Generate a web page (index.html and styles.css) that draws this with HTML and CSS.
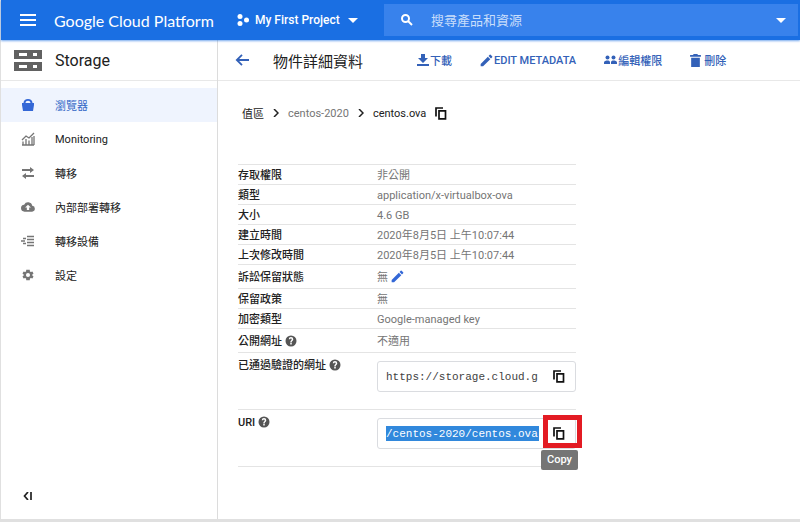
FILE: index.html
```html
<!DOCTYPE html>
<html lang="zh-Hant">
<head>
    <meta charset="UTF-8">
    <meta name="viewport" content="width=device-width, initial-scale=1.0">
    <title>物件詳細資料</title>
    <link rel="stylesheet" href="styles.css">
</head>
<body>
    <!-- Shared icons -->
    <svg class="sprite" aria-hidden="true">
        <symbol id="icon-copy" viewBox="0 0 12 13">
            <path d="M1 9.500V1h7M4 3.800h6.500v8H4z" fill="none" stroke="currentColor" stroke-width="1.700"/>
        </symbol>
        <symbol id="icon-pencil" viewBox="2 2 20 20">
            <path d="M3 17.250V21h3.750L17.810 9.940l-3.750-3.750L3 17.250zM20.710 7.040a1 1 0 0 0 0-1.410l-2.340-2.340a1 1 0 0 0-1.410 0l-1.830 1.830 3.750 3.750 1.830-1.830z"/>
        </symbol>
        <symbol id="icon-help" viewBox="0 0 24 24">
            <path d="M12 1a11 11 0 1 0 0 22 11 11 0 0 0 0-22zm1.500 18h-3v-3h3zm2.200-7.800-1 .9c-.8.800-1.200 1.400-1.200 2.900h-3v-.8c0-1.100.4-2.100 1.200-2.900l1.200-1.200c.4-.4.600-.9.600-1.400a1.600 1.600 0 0 0-3.200 0H7.500a4.500 4.500 0 0 1 9 0c0 1-.3 1.800-.8 2.500z"/>
        </symbol>
    </svg>

    <div class="console">
        <header class="topbar">
            <div class="brand">
                <button class="icon-btn" type="button" aria-label="Menu">
                    <svg width="16" height="12" viewBox="0 0 16 12"><path d="M0 0h16v2H0zM0 5h16v2H0zM0 10h16v2H0z"/></svg>
                </button>
                <a class="logo" href="#">Google Cloud Platform</a>
            </div>
            <button class="project" type="button">
                <svg width="12" height="12" viewBox="0 0 12 12"><circle cx="3" cy="2.500" r="2.500"/><circle cx="3" cy="9.500" r="2.500"/><circle cx="9.500" cy="6" r="2.500"/></svg>
                <span>My First Project</span>
                <svg width="10" height="5" viewBox="0 0 10 5"><path d="M0 0h10L5 5z"/></svg>
            </button>
            <form class="search">
                <svg width="12" height="12" viewBox="0 0 12 12"><circle cx="4.500" cy="4.500" r="3.500" fill="none" stroke="currentColor" stroke-width="2"/><path d="M7 7l4 4" stroke="currentColor" stroke-width="2"/></svg>
                <input type="text" placeholder="搜尋產品和資源" aria-label="搜尋產品和資源">
                <button class="icon-btn" type="button" aria-label="Expand">
                    <svg width="10" height="5" viewBox="0 0 10 5"><path d="M0 0h10L5 5z"/></svg>
                </button>
            </form>
        </header>

        <div class="layout">
            <aside class="sidebar">
                <div class="product">
                    <svg width="28" height="21" viewBox="0 0 28 21"><path fill-rule="evenodd" d="M0 0h28v9H0zM5 3v3h8V3zM19 3v3h4V3zM0 12h28v9H0zM5 15v3h8v-3zM19 15v3h4v-3z"/></svg>
                    <h2>Storage</h2>
                </div>
                <nav class="menu">
                    <a class="active" href="#">
                        <svg viewBox="0 0 14 14"><path d="M1 5h1.500c0-2.500 2-4 4.500-4s4.500 1.500 4.500 4H13v2l-1 6H2L1 7zM4.500 5h5c-.2-1.500-1-2.300-2.500-2.300S4.700 3.500 4.500 5z" fill-rule="evenodd"/></svg>
                        瀏覽器
                    </a>
                    <a href="#">
                        <svg viewBox="0 0 14 14"><path d="M1 8l4-4 3 2 5-5M2 13V9.500M5 13V7M8 13V8.500M11 13V5M13 13V4M1 13h12" fill="none" stroke="currentColor" stroke-width="1.300"/></svg>
                        Monitoring
                    </a>
                    <a href="#">
                        <svg viewBox="0 0 14 14"><path d="M1 3h8V1l4 3-4 3V5H1zM13 9H5V7l-4 3 4 3v-2h8z"/></svg>
                        轉移
                    </a>
                    <a href="#">
                        <svg viewBox="0 0 24 24"><path d="M19.350 10.040A7.490 7.490 0 0 0 5.350 8.040 6 6 0 0 0 6 20h13a5 5 0 0 0 .35-9.960zM14 13v4h-4v-4H7l5-5 5 5z"/></svg>
                        內部部署轉移
                    </a>
                    <a href="#">
                        <svg viewBox="0 0 14 14"><path d="M6 2.500h7M2 4.500h3M6 5.500h7M0 7h4M6 8.500h7M2 9.500h3M6 11.500h7" stroke="currentColor" stroke-width="1.500"/></svg>
                        轉移設備
                    </a>
                    <a href="#">
                        <svg viewBox="0 0 24 24"><path fill-rule="evenodd" d="M19.400 13a7.500 7.500 0 0 0 0-2l2.100-1.600-2-3.500-2.500 1a7.300 7.300 0 0 0-1.700-1L15 3H9l-.4 2.900a7.300 7.300 0 0 0-1.700 1l-2.400-1-2 3.500L4.600 11a7.500 7.500 0 0 0 0 2l-2.100 1.600 2 3.500 2.500-1a7.300 7.300 0 0 0 1.700 1L9 21h6l.4-2.900a7.300 7.300 0 0 0 1.700-1l2.400 1 2-3.500zM12 15.500a3.500 3.500 0 1 1 0-7 3.500 3.500 0 0 1 0 7z"/></svg>
                        設定
                    </a>
                </nav>
                <button class="icon-btn collapse" type="button" aria-label="Collapse">
                    <svg width="10" height="8" viewBox="0 0 10 8"><path d="M5 0L1.500 4 5 8M8 0v8" fill="none" stroke="currentColor" stroke-width="1.700"/></svg>
                </button>
            </aside>

            <main class="content">
                <div class="toolbar">
                    <button class="icon-btn back" type="button" aria-label="Back">
                        <svg width="14" height="12" viewBox="0 0 14 12"><path d="M14 6H2M7 .8L1.800 6 7 11.200" fill="none" stroke="currentColor" stroke-width="1.800"/></svg>
                    </button>
                    <h1>物件詳細資料</h1>
                    <div class="actions">
                        <button type="button"><svg width="12" height="12" viewBox="0 0 12 12"><path d="M4 0h4v4h3L6 9 1 4h3zM0 10h12v2H0z"/></svg>下載</button>
                        <button type="button"><svg width="13" height="13"><use href="#icon-pencil"/></svg>EDIT METADATA</button>
                        <button type="button"><svg width="13" height="10" viewBox="0 0 13 10"><circle cx="3.500" cy="2.500" r="2"/><circle cx="9.500" cy="2.500" r="2"/><path d="M0 9V7.500C0 6 2 5.500 3.500 5.500S6 6 6 7.500V9zM7 9V7.500C7 6 8 5.500 9.500 5.500S13 6 13 7.500V9z"/></svg>編輯權限</button>
                        <button type="button"><svg class="trash" width="11" height="13" viewBox="0 0 10 12"><path d="M0 1h3V0h4v1h3v1.500H0zM1 3.500h8V12H1z"/></svg>刪除</button>
                    </div>
                </div>

                <div class="details">
                    <nav class="breadcrumb">
                        <a class="root" href="#">值區</a>
                        <svg width="6" height="8" viewBox="0 0 6 8"><path d="M1 0l4 4-4 4" fill="none" stroke="currentColor" stroke-width="1.500"/></svg>
                        <a href="#">centos-2020</a>
                        <svg width="6" height="8" viewBox="0 0 6 8"><path d="M1 0l4 4-4 4" fill="none" stroke="currentColor" stroke-width="1.500"/></svg>
                        <span class="current">centos.ova</span>
                        <button class="icon-btn copy" type="button" aria-label="Copy name"><svg width="12" height="13"><use href="#icon-copy"/></svg></button>
                    </nav>

                    <table class="info">
                        <tr><th scope="row">存取權限</th><td>非公開</td></tr>
                        <tr><th scope="row">類型</th><td>application/x-virtualbox-ova</td></tr>
                        <tr><th scope="row">大小</th><td>4.6 GB</td></tr>
                        <tr><th scope="row">建立時間</th><td>2020年8月5日 上午10:07:44</td></tr>
                        <tr><th scope="row">上次修改時間</th><td>2020年8月5日 上午10:07:44</td></tr>
                        <tr class="tall"><th scope="row">訴訟保留狀態</th><td>無 <button class="icon-btn edit" type="button" aria-label="Edit"><svg width="13" height="13"><use href="#icon-pencil"/></svg></button></td></tr>
                        <tr><th scope="row">保留政策</th><td>無</td></tr>
                        <tr><th scope="row">加密類型</th><td>Google-managed key</td></tr>
                        <tr class="tall"><th scope="row">公開網址 <svg class="help" width="12" height="12"><use href="#icon-help"/></svg></th><td>不適用</td></tr>
                        <tr class="field">
                            <th scope="row"><label for="auth-url">已通過驗證的網址</label> <svg class="help" width="12" height="12"><use href="#icon-help"/></svg></th>
                            <td>
                                <div class="copy-box">
                                    <input id="auth-url" type="text" value="https://storage.cloud.g" readonly>
                                    <button class="icon-btn copy" type="button" aria-label="Copy URL"><svg width="12" height="13"><use href="#icon-copy"/></svg></button>
                                </div>
                            </td>
                        </tr>
                        <tr class="field">
                            <th scope="row"><label for="uri">URI</label> <svg class="help" width="12" height="12"><use href="#icon-help"/></svg></th>
                            <td>
                                <div class="copy-box">
                                    <input class="selected" id="uri" type="text" value="/centos-2020/centos.ova" readonly>
                                    <button class="icon-btn copy" type="button" aria-label="Copy URI"><svg width="12" height="13"><use href="#icon-copy"/></svg></button>
                                    <span class="highlight"></span>
                                    <span class="tooltip" role="tooltip">Copy</span>
                                </div>
                            </td>
                        </tr>
                    </table>
                </div>
            </main>
        </div>
    </div>
</body>
</html>
```
FILE: styles.css
```css
* {
    box-sizing: border-box;
}

body {
    margin: 0;
    font-family: Roboto, "Noto Sans CJK TC", sans-serif;
    font-size: 11px;
    color: #212121;
    background-color: #fff;
}

svg {
    fill: currentColor;
    flex-shrink: 0;
}

.sprite {
    display: none;
}

button {
    font: inherit;
    color: inherit;
    background: none;
    border: none;
    padding: 0;
    cursor: pointer;
}

.icon-btn {
    display: inline-flex;
    align-items: center;
    justify-content: center;
}

a {
    color: inherit;
    text-decoration: none;
}

.console {
    display: flex;
    flex-direction: column;
    min-height: 100vh;
    border-left: 1px solid #e0e0e0;
    border-bottom: 3px solid #e0e0e0;
}

/* Top bar */
.topbar {
    display: flex;
    align-items: center;
    height: 40px;
    background-color: #1a6fe3;
    color: #fff;
    box-shadow: 0 1px 2px rgba(26, 111, 227, 0.6);
    z-index: 1;
}

.brand {
    display: flex;
    align-items: center;
    gap: 18px;
    width: 236px;
    padding-left: 19px;
}

.logo {
    font-family: Lato, sans-serif;
    font-size: 16px;
    white-space: nowrap;
}

.project {
    display: flex;
    align-items: center;
    gap: 6px;
    width: 147px;
    font-size: 12px;
    font-weight: 500;
    white-space: nowrap;
}

.project span {
    margin-right: 2px;
}

.search {
    display: flex;
    flex: 1;
    align-items: center;
    gap: 18px;
    height: 32px;
    margin-right: 2px;
    padding: 0 12px 0 17px;
    background-color: #3882ec;
}

.search input {
    flex: 1;
    min-width: 0;
    padding: 0;
    border: none;
    outline: none;
    background: none;
    font: inherit;
    font-size: 13px;
    color: #fff;
}

.search input::placeholder {
    color: #c9defb;
}

/* Sidebar */
.layout {
    display: flex;
    flex: 1;
}

.sidebar {
    display: flex;
    flex-direction: column;
    width: 217px;
    flex-shrink: 0;
    border-right: 1px solid #dcdcdc;
}

.product {
    display: flex;
    align-items: center;
    gap: 13px;
    height: 41px;
    padding-left: 13px;
    border-bottom: 1px solid #e8e8e8;
    color: #616161;
}

.product h2 {
    margin: 0;
    font-size: 16px;
    font-weight: 400;
    color: #212121;
}

.menu {
    padding-top: 7px;
}

.menu a {
    display: flex;
    align-items: center;
    gap: 20px;
    height: 34px;
    padding-left: 20px;
}

.menu svg {
    width: 14px;
    height: 14px;
    color: #757575;
}

.menu .active {
    background-color: #eff4fe;
    color: #3367c6;
}

.menu .active svg {
    color: #3367d6;
}

.collapse {
    margin: auto 0 19px 22px;
    align-self: flex-start;
}

/* Main area */
.content {
    flex: 1;
    min-width: 0;
}

.toolbar {
    display: flex;
    align-items: center;
    height: 41px;
    padding-left: 17px;
    border-bottom: 1px solid #e8e8e8;
    color: #3361b8;
    white-space: nowrap;
}

.toolbar h1 {
    width: 144px;
    margin: 0 0 0 24px;
    font-size: 15px;
    font-weight: 400;
    color: #212121;
}

.actions {
    display: flex;
    gap: 28px;
}

.actions button {
    display: flex;
    align-items: center;
    gap: 1px;
    font-weight: 500;
}

.actions .trash {
    margin-right: 2px;
}

.details {
    padding: 22px 20px;
}

.breadcrumb {
    display: flex;
    align-items: center;
    gap: 9px;
    height: 20px;
    padding-left: 4px;
    color: #757575;
}

.breadcrumb .root,
.breadcrumb .current,
.breadcrumb svg {
    color: #212121;
}

.copy svg {
    color: #111;
}

/* Object info */
.info {
    width: 338px;
    margin-top: 41px;
    border-collapse: collapse;
    line-height: 16px;
}

.info tr {
    height: 20px;
    border-top: 1px solid #e4e4e4;
}

.info tr:last-child {
    border-bottom: 1px solid #e4e4e4;
}

.info th {
    width: 139px;
    padding: 3px 0 0;
    font-weight: 500;
    text-align: left;
    vertical-align: top;
}

.info td {
    padding: 3px 0 0;
    color: #757575;
    vertical-align: top;
}

.info .tall {
    height: 24px;
}

.info .tall th,
.info .tall td {
    padding-top: 5px;
}

.info .field {
    height: 57px;
}

.info .field th {
    padding-top: 5px;
}

.info .field td {
    padding-top: 8px;
}

.help {
    color: #555;
    vertical-align: -2px;
}

.edit {
    color: #3367d6;
    vertical-align: -2px;
}

.copy-box {
    position: relative;
    display: flex;
    align-items: center;
    justify-content: space-between;
    height: 31px;
    padding: 0 10px 0 8px;
    border: 1px solid #dadce0;
    border-radius: 3px;
    color: #212121;
}

.copy-box input {
    width: 153px;
    height: 15px;
    padding: 0;
    border: none;
    outline: none;
    font-family: "Liberation Mono", monospace;
    font-size: 11px;
    color: #424242;
}

.copy-box .selected {
    background-color: #3188dc;
    color: #fff;
}

.highlight {
    position: absolute;
    top: -4px;
    right: -7px;
    width: 39px;
    height: 33px;
    border: 5px solid #e31b23;
    pointer-events: none;
}

.tooltip {
    position: absolute;
    top: 31px;
    right: -3px;
    padding: 2px 6px;
    border-radius: 2px;
    background-color: #757575;
    color: #fff;
    font-weight: 500;
}
```
